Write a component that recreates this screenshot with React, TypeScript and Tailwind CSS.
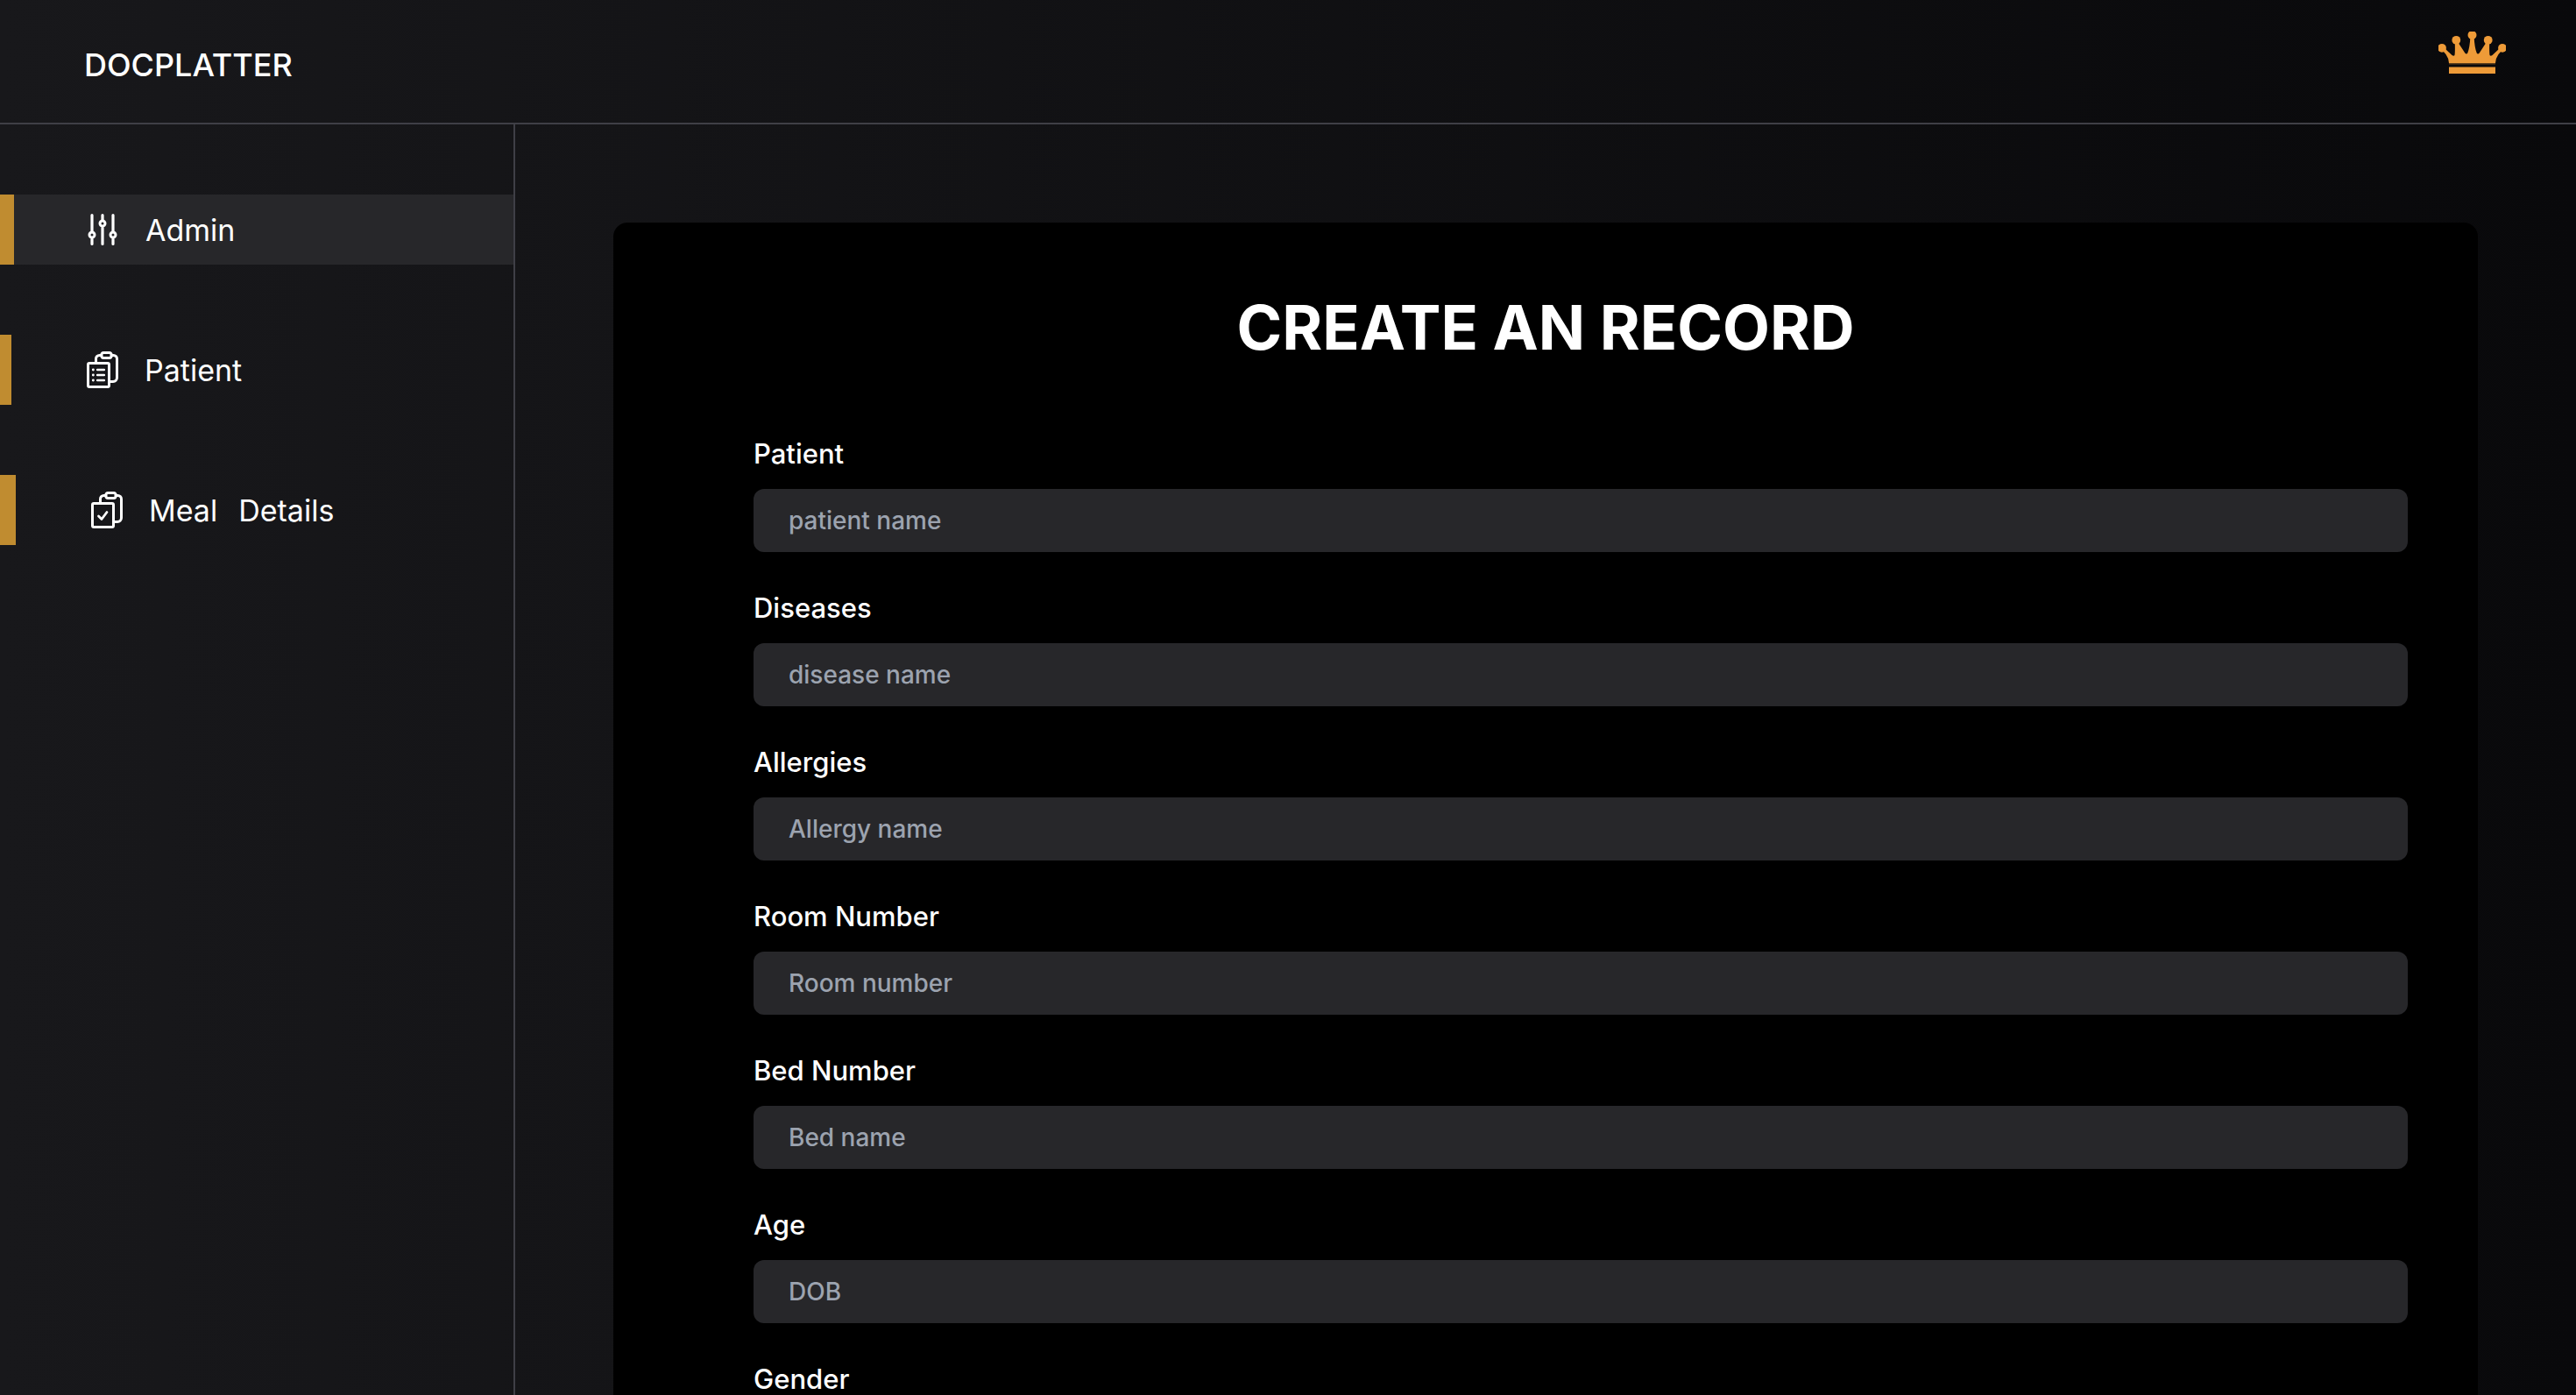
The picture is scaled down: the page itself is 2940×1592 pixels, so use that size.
import type { ReactNode } from "react";

const fields = [
  { id: "patient", label: "Patient", placeholder: "patient name" },
  { id: "diseases", label: "Diseases", placeholder: "disease name" },
  { id: "allergies", label: "Allergies", placeholder: "Allergy name" },
  { id: "room", label: "Room Number", placeholder: "Room number" },
  { id: "bed", label: "Bed Number", placeholder: "Bed name" },
  { id: "age", label: "Age", placeholder: "DOB" },
  { id: "gender", label: "Gender", placeholder: "Gender" },
];

function SlidersIcon() {
  return (
    <svg viewBox="0 0 36 42" className="h-[42px] w-9 shrink-0" fill="none" stroke="white" strokeWidth="3.200" strokeLinecap="round" aria-hidden="true">
      <path d="M5 4.500V23M5 32v5.500M17 4.500V10M17 19v18.500M29 4.500V23M29 32v5.500" />
      <circle cx="5" cy="27" r="3" strokeWidth="3" />
      <circle cx="17" cy="14" r="3" strokeWidth="3" />
      <circle cx="29" cy="27" r="3" strokeWidth="3" />
    </svg>
  );
}

function ClipboardIcon({ children }: { children: ReactNode }) {
  return (
    <svg viewBox="0 0 36 42" className="h-[42px] w-9 shrink-0" fill="none" stroke="white" strokeWidth="3" strokeLinecap="round" strokeLinejoin="round" aria-hidden="true">
      <rect x="1.500" y="13.500" width="24" height="27" rx="1.500" />
      <path d="M10.500 13V8.500a4 4 0 0 1 4-4H17M28 4.500h2.500a4 4 0 0 1 4 4V30a4.500 4.500 0 0 1-4.500 4.500H26" />
      <path d="M19 1.500h7q1.800 0 2.500 3-.5 3-2.500 3h-7q-2 0-2.500-3 .7-3 2.500-3z" />
      {children}
    </svg>
  );
}

function PatientIcon() {
  return (
    <ClipboardIcon>
      <path d="M12.200 21h7.600M12.200 27h7.600M12.200 33h7.600" strokeWidth="2.600" />
      <path d="M7.300 21h.1M7.300 27h.1M7.300 33h.1" strokeWidth="2.800" />
    </ClipboardIcon>
  );
}

function MealIcon() {
  return (
    <ClipboardIcon>
      <path d="M8.500 28l3.500 3.500 6-8" strokeWidth="2.800" />
    </ClipboardIcon>
  );
}

function CrownIcon() {
  return (
    <svg viewBox="0 0 77 48" className="h-12 w-[77px]" fill="#ee9b38" aria-hidden="true">
      <circle cx="4" cy="18.800" r="4.900" />
      <circle cx="20.300" cy="9.800" r="4.900" />
      <circle cx="38.500" cy="4" r="5" />
      <circle cx="56.700" cy="9.800" r="4.900" />
      <circle cx="73" cy="18.800" r="4.900" />
      <path d="M7 19l8.500 8q1.800 1.200 2.800.3.800-1 .5-14.300h4l7.500 11.500q1.700 1.800 3 0Q35.800 18 36.300 7h4.400q.5 11 3 17.500 1.300 1.800 3 0L54.200 13h4q-.3 13.300.5 14.300 1 .9 2.800-.3L70 19l2 3-3.500 4Q65.500 30 65 36H12q-.5-6-3.500-10L5 22z" />
      <path d="M12 36h53v1.500H12z" opacity="0.350" />
      <path d="M12 40.500h53V48H12z" />
    </svg>
  );
}

export default function App() {
  return (
    <div className="flex h-screen flex-col overflow-hidden bg-linear-to-r from-[#18181b] to-[#09090b] font-['Inter',sans-serif] text-white">
      <header className="flex shrink-0 items-start justify-between border-b-2 border-[#3f3f46] pr-20 pl-24">
        <a href="#home" className="flex h-[140px] items-center pt-2 text-4xl font-medium">
          DOCPLATTER
        </a>
        <button type="button" aria-label="Premium" className="mt-9">
          <CrownIcon />
        </button>
      </header>

      <div className="flex min-h-0 flex-1">
        <nav className="flex w-1/5 shrink-0 flex-col gap-20 border-r-2 border-[#3f3f46] pt-20 text-[34px]">
          <a href="#admin" className="flex h-20 items-center bg-[#27272a]">
            <span className="mr-[84px] w-4 self-stretch bg-[#c08c30]" />
            <SlidersIcon />
            <span className="ml-[30px]">Admin</span>
          </a>
          <a href="#patient" className="flex h-20 items-center">
            <span className="mr-[86px] w-[13px] self-stretch bg-[#c08c30]" />
            <PatientIcon />
            <span className="ml-[30px]">Patient</span>
          </a>
          <a href="#meal" className="flex h-20 items-center">
            <span className="mr-[86px] w-[18px] self-stretch bg-[#c08c30]" />
            <MealIcon />
            <span className="ml-[30px] flex gap-6">
              <span>Meal</span>
              <span>Details</span>
            </span>
          </a>
        </nav>

        <main className="min-w-0 flex-1 pt-28 pr-28 pl-28">
          <form className="rounded-2xl bg-black pt-20 pr-20 pb-20 pl-40">
            <h1 className="mr-20 mb-20 text-center text-[70px] leading-[80px] font-bold">CREATE AN RECORD</h1>
            <div className="flex flex-col gap-10">
              {fields.map((field) => (
                <div key={field.id} className="flex flex-col gap-4">
                  <label htmlFor={field.id} className="text-[31px] leading-[48px] font-medium">
                    {field.label}
                  </label>
                  <input
                    id={field.id}
                    type="text"
                    placeholder={field.placeholder}
                    className="h-[72px] w-full rounded-xl bg-[#27272a] px-10 text-[28px] font-medium placeholder:text-[#9ca3af]"
                  />
                </div>
              ))}
            </div>
          </form>
        </main>
      </div>
    </div>
  );
}
